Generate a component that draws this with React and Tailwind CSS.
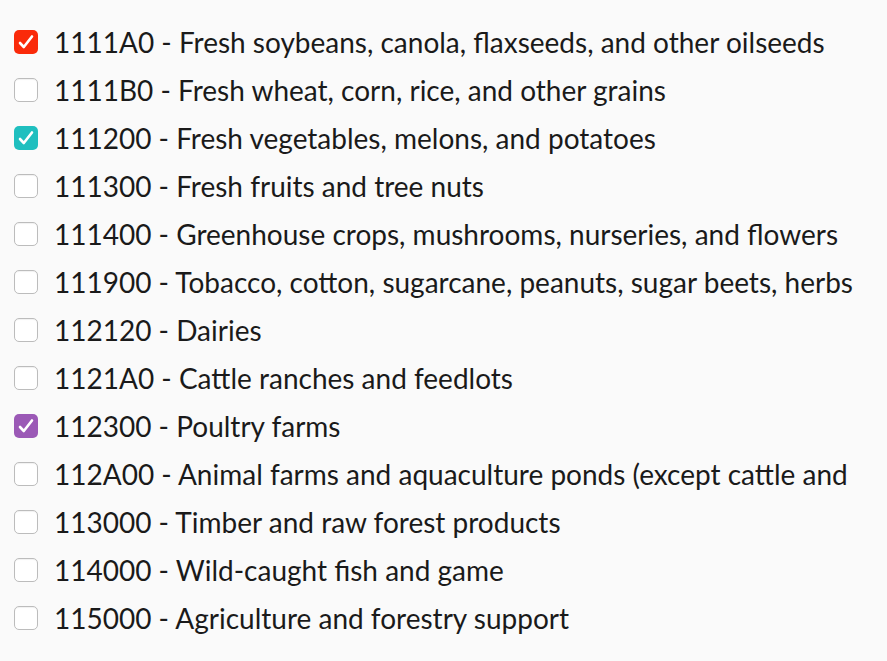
import React from 'react';

const items = [
  { label: '1111A0 - Fresh soybeans, canola, flaxseeds, and other oilseeds', checked: 'bg-[#fa2a0a]' },
  { label: '1111B0 - Fresh wheat, corn, rice, and other grains' },
  { label: '111200 - Fresh vegetables, melons, and potatoes', checked: 'bg-[#1fbfbf]' },
  { label: '111300 - Fresh fruits and tree nuts' },
  { label: '111400 - Greenhouse crops, mushrooms, nurseries, and flowers' },
  { label: '111900 - Tobacco, cotton, sugarcane, peanuts, sugar beets, herbs' },
  { label: '112120 - Dairies' },
  { label: '1121A0 - Cattle ranches and feedlots' },
  { label: '112300 - Poultry farms', checked: 'bg-[#9b59b6]' },
  { label: '112A00 - Animal farms and aquaculture ponds (except cattle and' },
  { label: '113000 - Timber and raw forest products' },
  { label: '114000 - Wild-caught fish and game' },
  { label: '115000 - Agriculture and forestry support' },
];

const Box = ({ checked }) => {
  if (!checked) {
    return <span className="w-[24px] h-[24px] shrink-0 rounded-[5px] border border-[#bcbcbc] bg-white shadow-[inset_0_1px_1px_rgba(0,0,0,0.06)]" />;
  }
  return (
    <span className={`w-[24px] h-[24px] shrink-0 rounded-[5px] flex ${checked}`}>
      <svg width="24" height="24" viewBox="0 0 24 24" fill="none">
        <path d="M6 13 L9.8 17 L18 6.5" stroke="white" strokeWidth="2.6" strokeLinecap="round" strokeLinejoin="round" />
      </svg>
    </span>
  );
};

export default function App() {
  return (
    <div className="w-[887px] h-[661px] overflow-hidden bg-[#fafafa] text-[#1a1a1a] font-['Lato',sans-serif]">
      <ul className="pt-[18px] pl-[14px]">
        {items.map((it) => (
          <li key={it.label} className="h-[48px] flex items-center gap-[16px] whitespace-nowrap">
            <Box checked={it.checked} />
            <span className="text-[28px] leading-[32px]">{it.label}</span>
          </li>
        ))}
      </ul>
    </div>
  );
}
